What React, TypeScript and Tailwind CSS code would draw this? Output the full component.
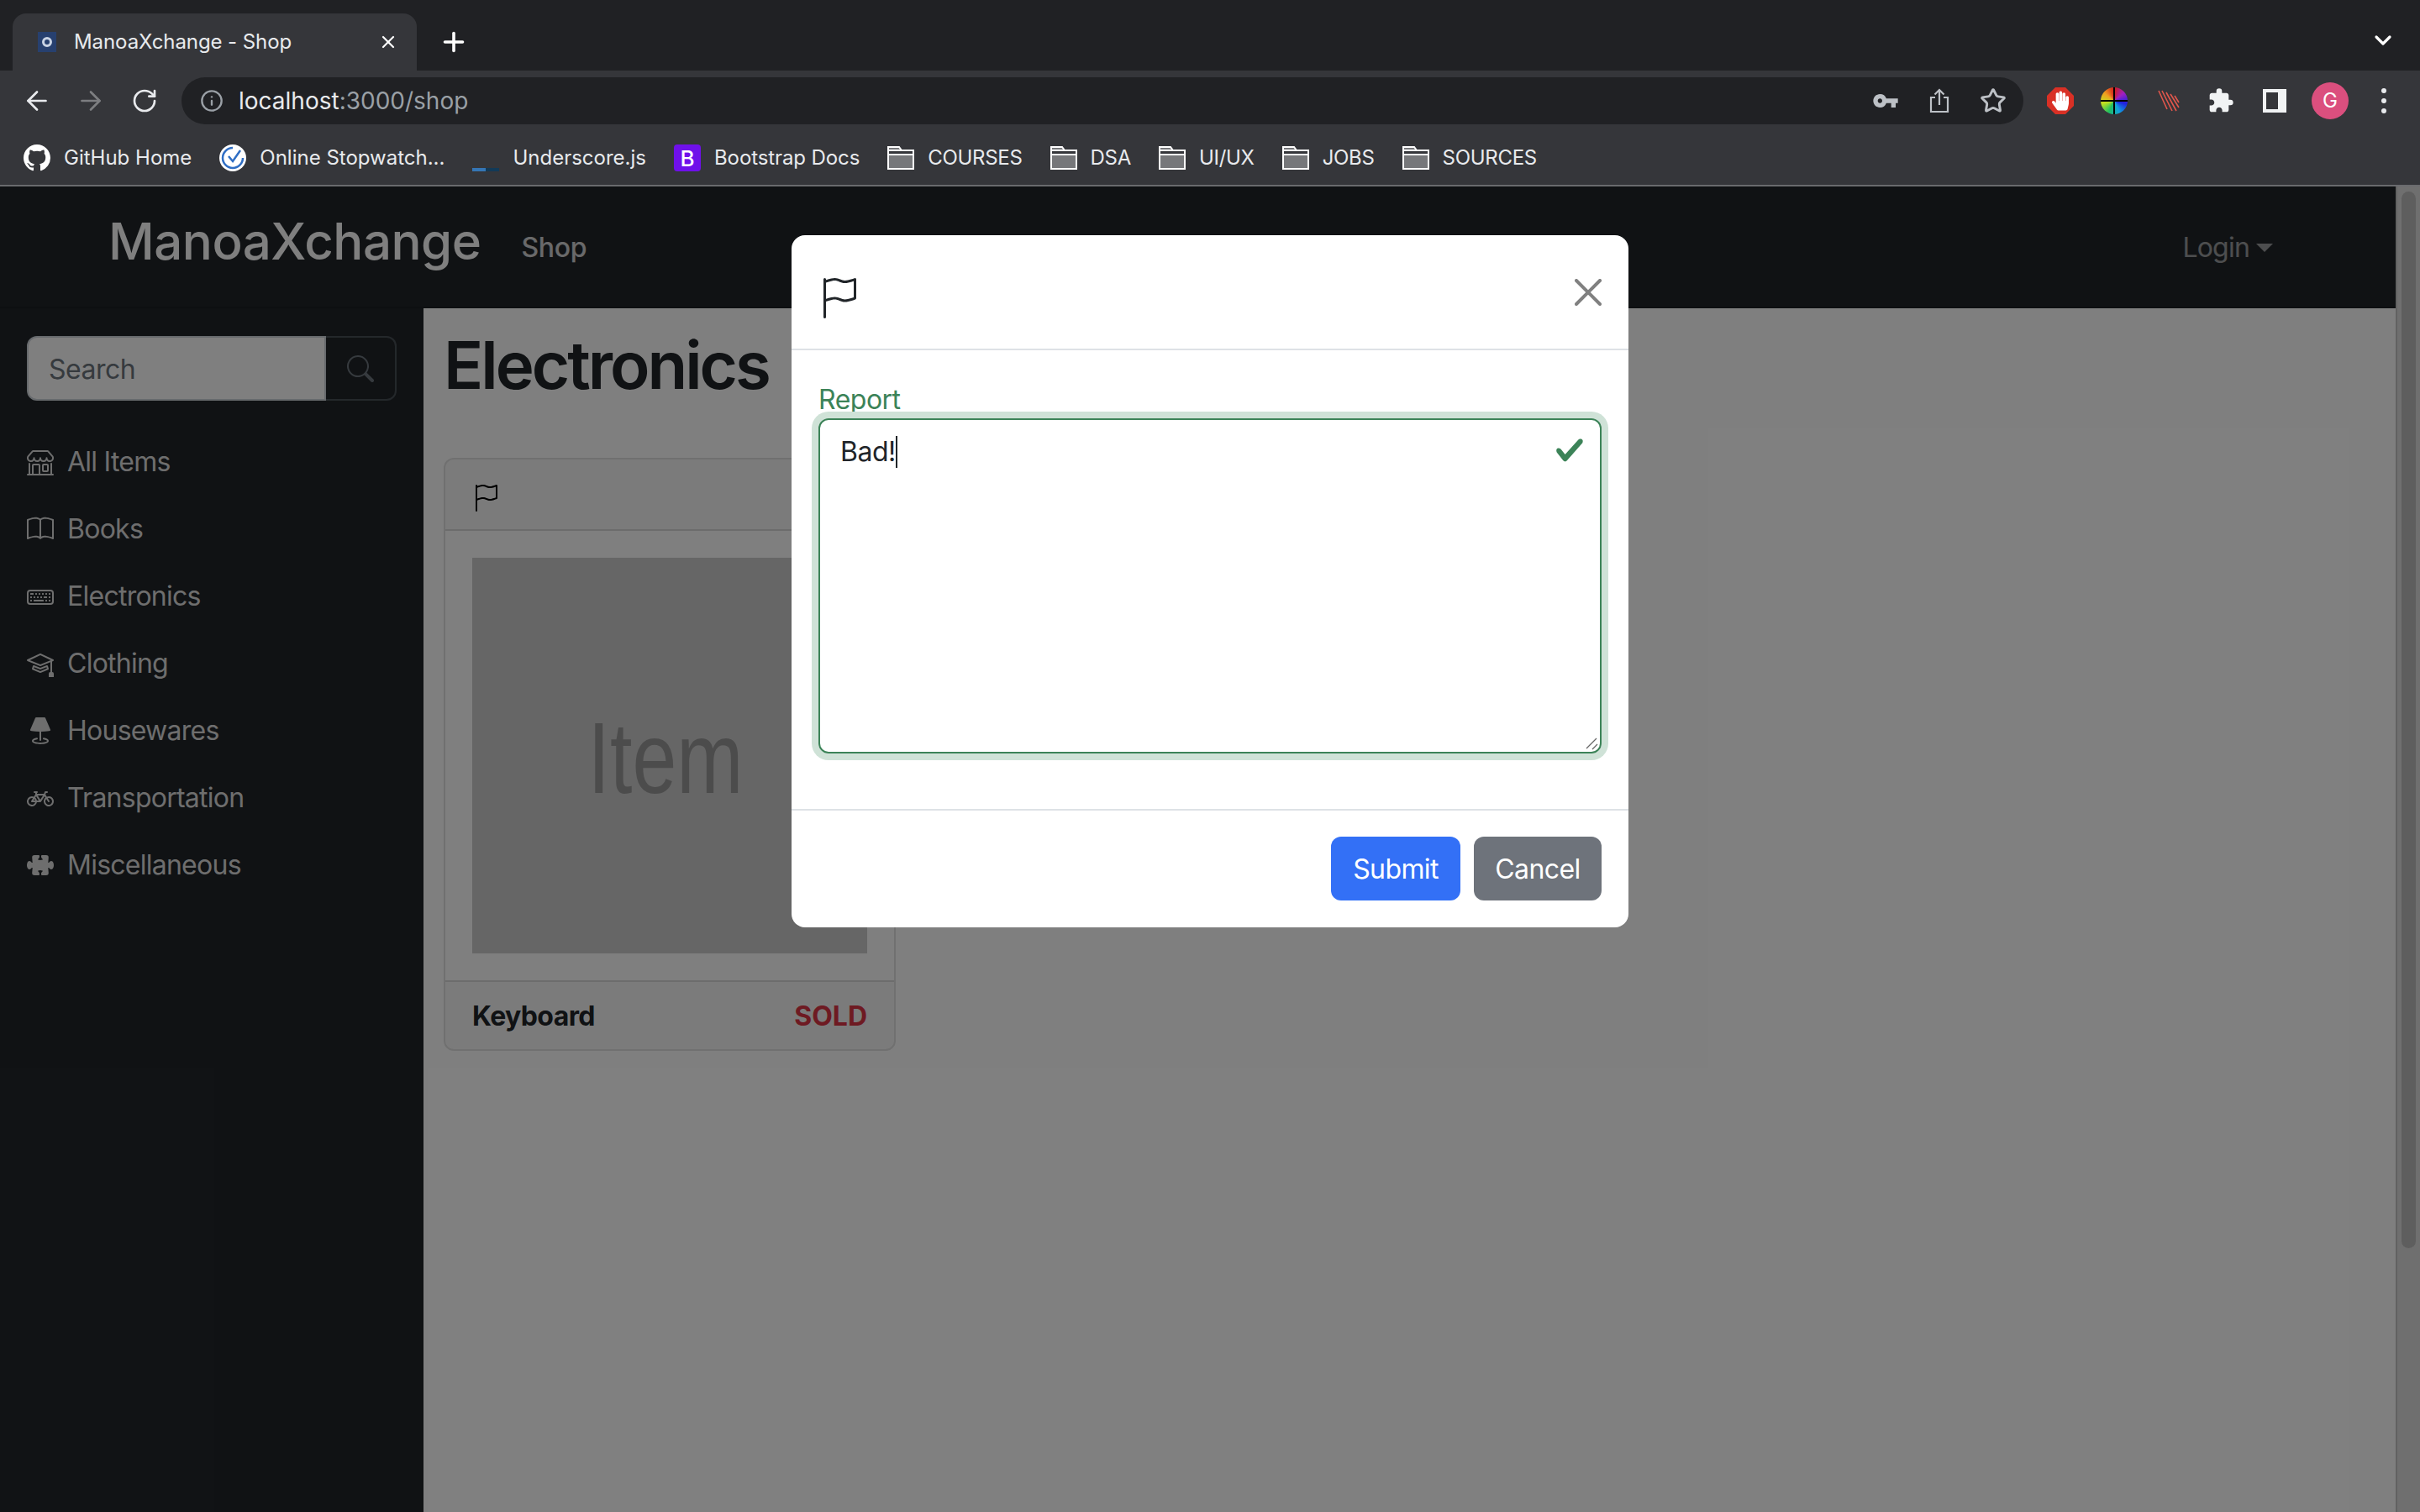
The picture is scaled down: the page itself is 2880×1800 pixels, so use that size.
import { ArrowLeft, ArrowRight, ChevronDown, Info, Plus, RotateCw, Star, X } from "lucide-react";
import { BsBicycle, BsBook, BsFlag, BsGithub, BsKeyboard, BsLampFill, BsMortarboard, BsPuzzleFill, BsSearch, BsShop } from "react-icons/bs";
import { FaHandPaper } from "react-icons/fa";
import { MdExtension, MdVpnKey } from "react-icons/md";

const SIDE_ITEMS = [
  { label: "All Items", icon: <BsShop className="w-8 h-8" /> },
  { label: "Books", icon: <BsBook className="w-8 h-8" /> },
  { label: "Electronics", icon: <BsKeyboard className="w-8 h-8" /> },
  { label: "Clothing", icon: <BsMortarboard className="w-8 h-8" /> },
  { label: "Housewares", icon: <BsLampFill className="w-8 h-8" /> },
  { label: "Transportation", icon: <BsBicycle className="w-8 h-8" /> },
  { label: "Miscellaneous", icon: <BsPuzzleFill className="w-8 h-8" /> },
];

const FOLDERS = ["COURSES", "DSA", "UI/UX", "JOBS", "SOURCES"];

function FolderIcon() {
  return (
    <svg viewBox="0 0 32 28" className="w-8 h-7 shrink-0">
      <path d="M1 27V1h13l3 4h14v22z" fill="#76777a" stroke="#fff" strokeWidth="2" />
      <path d="M1 5h30v5H1z" fill="#35363a" stroke="#fff" strokeWidth="2" />
    </svg>
  );
}

function Bookmark({ icon, label }: { icon: React.ReactNode; label: string }) {
  return (
    <div className="flex items-center gap-4">
      {icon}
      <span className="text-[24px] text-[#e8eaed] whitespace-nowrap">{label}</span>
    </div>
  );
}

function BrowserChrome() {
  return (
    <div className="shrink-0">
      {/* Tabs */}
      <div className="h-[84px] bg-[#202124] flex items-end pl-[15px] pr-[28px]">
        <div className="w-[481px] h-[68px] rounded-t-[16px] bg-[#35363a] flex items-center pl-[30px] pr-[22px]">
          <div className="w-[22px] h-[24px] bg-[#27406f] flex items-center justify-center shrink-0">
            <div className="w-3 h-3 rounded-full border-[3px] border-[#c9d3e4]" />
          </div>
          <span className="ml-[21px] text-[24px] tracking-[-0.08px] text-[#e8eaed] whitespace-nowrap">ManoaXchange - Shop</span>
          <X className="ml-auto w-6 h-6 text-white" strokeWidth={2.2} />
        </div>
        <Plus className="ml-[26px] mb-[16px] w-9 h-9 text-white" strokeWidth={2.4} />
        <ChevronDown className="ml-auto mb-[20px] w-8 h-8 text-white" strokeWidth={2.4} />
      </div>

      {/* Toolbar */}
      <div className="h-[64px] bg-[#35363a] flex items-start pt-2">
        <div className="w-[216px] h-14 flex items-center pl-[26px] gap-[28px] shrink-0">
          <ArrowLeft className="w-9 h-9 text-[#e8eaed]" strokeWidth={1.800} />
          <ArrowRight className="w-9 h-9 text-[#7d7e81]" strokeWidth={1.800} />
          <RotateCw className="ml-[2px] w-8 h-8 text-[#e8eaed]" strokeWidth={2} />
        </div>
        <div className="w-[2192px] h-14 rounded-full bg-[#202124] flex items-center pl-[22px] pr-[20px] shrink-0">
          <Info className="w-7 h-7 text-[#9aa0a6]" strokeWidth={2} />
          <span className="ml-[18px] text-[28px] text-[#e8eaed] whitespace-nowrap">
            localhost<span className="text-[#9aa0a6]">:3000/shop</span>
          </span>
          <MdVpnKey className="ml-auto w-8 h-8 text-[#bdc1c6]" />
          <svg viewBox="0 0 24 30" className="ml-[36px] w-6 h-[30px] text-[#bdc1c6]" fill="none" stroke="currentColor" strokeWidth="2.2">
            <path d="M7 11H2v17h20V11h-5M12 20V2M6.5 7.5 12 2l5.500 5.500" />
          </svg>
          <Star className="ml-[36px] w-8 h-8 text-[#bdc1c6]" strokeWidth={2.2} />
        </div>
        <div className="flex-1 h-14 flex items-center pl-[28px] gap-[32px]">
          <div className="relative w-8 h-8 shrink-0">
            <svg viewBox="0 0 32 32" className="w-8 h-8">
              <polygon points="10,0 22,0 32,10 32,22 22,32 10,32 0,22 0,10" fill="#d93025" />
            </svg>
            <FaHandPaper className="absolute left-[6px] top-[4px] w-5 h-6 text-white" />
          </div>
          <div className="relative w-8 h-8 shrink-0 rounded-full bg-[conic-gradient(#d01c1c,#a020c0,#2020e0,#10a0e0,#20c060,#c0e020,#f0a020,#d01c1c)]">
            <div className="absolute left-[15px] top-0 w-[2px] h-8 bg-black" />
            <div className="absolute top-[15px] left-0 w-8 h-[2px] bg-black" />
          </div>
          <svg viewBox="0 0 28 28" className="ml-[3px] w-7 h-7 shrink-0" stroke="#e2574c" strokeWidth="1.600">
            <path d="M2 2 12 24M6 2l12 24M11 4l12 22M16 6l10 16M21 8l5 8" />
          </svg>
          <MdExtension className="w-8 h-8 text-[#f1f3f4] shrink-0" />
          <div className="ml-[2px] w-7 h-7 border-[4px] border-r-[10px] border-[#f1f3f4] shrink-0" />
          <div className="w-11 h-11 -ml-[2px] rounded-full bg-[#db4f7e] flex items-center justify-center text-[24px] text-white shrink-0">G</div>
          <div className="flex flex-col gap-[6px] ml-[7px] shrink-0">
            <div className="w-[6px] h-[6px] rounded-full bg-[#e8eaed]" />
            <div className="w-[6px] h-[6px] rounded-full bg-[#e8eaed]" />
            <div className="w-[6px] h-[6px] rounded-full bg-[#e8eaed]" />
          </div>
        </div>
      </div>

      {/* Bookmarks */}
      <div className="h-[74px] bg-[#35363a] border-b-2 border-[#6a6b6e] flex items-center pl-[28px] pt-[8px] gap-[33px]">
        <Bookmark icon={<BsGithub className="w-8 h-8 text-white shrink-0" />} label="GitHub Home" />
        <Bookmark
          icon={
            <svg viewBox="0 0 32 32" className="w-8 h-8 shrink-0">
              <circle cx="16" cy="16" r="16" fill="#fff" />
              <path d="M16 4a12 12 0 1 0 12 12" fill="none" stroke="#2f6ec4" strokeWidth="2.500" />
              <path d="m11 14 5 6 9-13" fill="none" stroke="#2f6ec4" strokeWidth="2.500" />
            </svg>
          }
          label="Online Stopwatch..."
        />
        <Bookmark
          icon={
            <div className="w-8 h-8 flex items-end shrink-0">
              <div className="w-4 h-1 bg-[#3576b5]" />
              <div className="w-4 h-1 bg-[#123a57]" />
            </div>
          }
          label="Underscore.js"
        />
        <div className="tracking-[-0.1px]">
          <Bookmark
            icon={
              <div className="w-8 h-8 rounded-[4px] bg-[#6f10ea] flex items-center justify-center text-[26px] font-medium text-white shrink-0">B</div>
            }
            label="Bootstrap Docs"
          />
        </div>
        <div className="flex items-center gap-[33px] tracking-[-0.3px]">
          {FOLDERS.map((name) => (
            <Bookmark key={name} icon={<FolderIcon />} label={name} />
          ))}
        </div>
      </div>
    </div>
  );
}

function ItemCard() {
  return (
    <div className="w-[538px] rounded-xl border-2 border-black/12 overflow-hidden">
      <div className="h-[85px] bg-black/3 border-b-2 border-black/12 flex items-center pl-[32px] pt-[8px]">
        <BsFlag className="w-8 h-8 text-black" />
      </div>
      <div className="p-8">
        <div className="h-[471px] bg-[#cccccc] flex items-center justify-center overflow-hidden">
          <span className="font-['Liberation_Sans',sans-serif] text-[95px] tracking-normal text-[#999999] scale-y-[1.27] -ml-[10px] mt-[6px]">Item</span>
        </div>
      </div>
      <div className="h-[82px] bg-black/3 border-t-2 border-black/12 flex items-center justify-between px-8 pt-[2px] text-[32px] font-bold">
        <span className="text-[#212529] tracking-[-0.6px]">Keyboard</span>
        <span className="text-[#dc3545]">SOLD</span>
      </div>
    </div>
  );
}

function ReportModal() {
  return (
    <div className="absolute left-[942px] top-[58px] w-[996px] h-[824px] bg-white rounded-2xl flex flex-col text-[#212529]">
      <div className="h-[137px] border-b-2 border-[#dee2e6] flex items-center justify-between px-8 shrink-0">
        <BsFlag className="w-12 h-12 mt-[14px]" />
        <svg viewBox="0 0 16 16" className="w-8 h-8 text-[#808080]" fill="currentColor">
          <path d="M.293.293a1 1 0 011.414 0L8 6.586 14.293.293a1 1 0 111.414 1.414L9.414 8l6.293 6.293a1 1 0 01-1.414 1.414L8 9.414l-6.293 6.293a1 1 0 01-1.414-1.414L6.586 8 .293 1.707a1 1 0 010-1.414z" />
        </svg>
      </div>
      <div className="h-[546px] px-8 pt-[33px] shrink-0">
        <div className="h-[48px] text-[32px] tracking-[-0.5px] text-[#3c8358] leading-[52px]">Report</div>
        <div className="relative h-[399px] border-2 border-[#3c8358] rounded-xl shadow-[0_0_0_8px_#cfe2d7] pl-[24px] pr-[26px] pt-[14px]">
          <div className="flex items-center text-[32px] tracking-[-0.5px] leading-[48px]">
            Bad!<span className="w-[2px] h-[38px] bg-[#212529]" />
          </div>
          <svg viewBox="0 0 8 8" className="absolute right-[18px] top-[18px] w-9 h-9" fill="#3c8358">
            <path d="M2.3 6.73.6 4.53c-.4-1.04.46-1.4 1.100-.8l1.100 1.400 3.400-3.800c.6-.63 1.600-.27 1.200.7l-4 4.600c-.43.5-.8.4-1.100.1z" />
          </svg>
          <svg viewBox="0 0 16 16" className="absolute right-[2px] bottom-[2px] w-4 h-4" stroke="#666" strokeWidth="1.300">
            <path d="M2 14 14 2M9 15l6-6" />
          </svg>
        </div>
      </div>
      <div className="flex-1 border-t-2 border-[#dee2e6] flex items-start justify-end gap-4 pt-[31px] pr-8 text-[32px] tracking-[-0.6px] text-white">
        <div className="w-[154px] h-[76px] pt-[2px] rounded-xl bg-[#3370f6] flex items-center justify-center">Submit</div>
        <div className="w-[152px] h-[76px] pt-[2px] rounded-xl bg-[#6e737b] flex items-center justify-center">Cancel</div>
      </div>
    </div>
  );
}

export default function App() {
  return (
    <div className="w-[2880px] h-[1800px] flex flex-col overflow-hidden font-['Inter',sans-serif] bg-white">
      <BrowserChrome />
      <div className="relative flex-1 flex flex-col min-h-0">
        <div className="flex-1 flex min-h-0">
          <div className="flex-1 flex flex-col min-w-0">
            {/* Navbar */}
            <div className="h-[145px] bg-[#212529] flex items-center pl-[129px] pr-[146px] shrink-0 border-b-2 border-[#1b1e22]">
              <span className="text-[60px] font-medium tracking-[-0.5px] text-white -mt-[14px]">ManoaXchange</span>
              <span className="ml-[48px] mt-[2px] text-[32px] font-medium tracking-[-0.3px] text-white/80">Shop</span>
              <div className="ml-auto flex items-center gap-2 mt-[2px] text-[32px] tracking-[-0.8px] text-white/55">
                Login
                <div className="w-0 h-0 border-x-[10px] border-x-transparent border-t-[10px] border-t-white/55" />
              </div>
            </div>
            <div className="flex-1 flex min-h-0">
              {/* Sidebar */}
              <div className="w-[504px] bg-[#212529] px-8 pt-[33px] shrink-0">
                <div className="flex h-[77px]">
                  <div className="w-[356px] bg-white border-2 border-[#ced4da] rounded-l-xl flex items-center pl-[24px] pt-[2px] text-[32px] tracking-[-0.5px] text-[#6c757d]">Search</div>
                  <div className="w-[84px] border-2 border-l-0 border-[#495057] rounded-r-xl flex items-center justify-center">
                    <BsSearch className="w-8 h-8 text-[#6c757d]" />
                  </div>
                </div>
                <div className="mt-[33px] flex flex-col">
                  {SIDE_ITEMS.map((item) => (
                    <div key={item.label} className="h-[80px] flex items-center gap-4 text-[32px] tracking-[-0.75px] text-[#dcdcdc]">
                      {item.icon}
                      {item.label}
                    </div>
                  ))}
                </div>
              </div>
              {/* Main */}
              <div className="flex-1 pl-[24px] pt-[8px]">
                <h1 className="text-[78px] font-semibold tracking-[-3px] leading-[120px] text-[#212529]">Electronics</h1>
                <div className="mt-[50px]">
                  <ItemCard />
                </div>
              </div>
            </div>
          </div>
          {/* Scrollbar */}
          <div className="w-[29px] bg-[#dedede] border-l-2 border-[#c4c4c4] pt-[6px] px-[5px] shrink-0">
            <div className="h-[1258px] rounded-full bg-[#bcbcbc]" />
          </div>
        </div>
        {/* Backdrop */}
        <div className="absolute inset-0 bg-black/50" />
        <ReportModal />
      </div>
    </div>
  );
}
